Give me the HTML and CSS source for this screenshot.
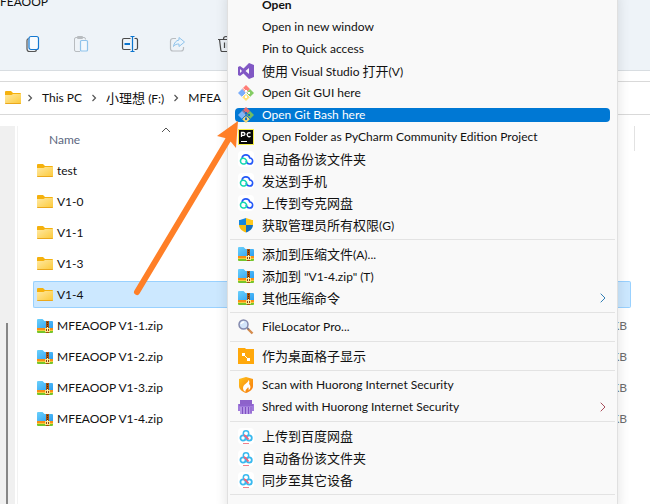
FILE: index.html
```html
<!DOCTYPE html>
<html lang="en">
<head>
<meta charset="utf-8">
<title>MFEAOOP</title>
<link rel="stylesheet" href="styles.css">
</head>
<body>
<svg class="defs" width="0" height="0" aria-hidden="true">
  <defs>
    <linearGradient id="gFolder" x1="0" y1="0" x2="1" y2="1"><stop offset="0" stop-color="#ffe9a3"/><stop offset="1" stop-color="#fcc938"/></linearGradient>
    <linearGradient id="gZip" x1="0" y1="0" x2="1" y2="1"><stop offset="0" stop-color="#6ad0fb"/><stop offset="1" stop-color="#2b9df0"/></linearGradient>
    <linearGradient id="gCloud" x1="0" y1="1" x2="1" y2="0"><stop offset="0" stop-color="#10e8a0"/><stop offset=".3" stop-color="#18b8e8"/><stop offset=".45" stop-color="#2458f8"/><stop offset="1" stop-color="#2458f8"/></linearGradient>
    <linearGradient id="gFire" x1="0" y1="0" x2="1" y2="1"><stop offset="0" stop-color="#ffc21a"/><stop offset="1" stop-color="#f7780c"/></linearGradient>
    <symbol id="folder" viewBox="0 0 16 16">
      <path d="M0 2a1 1 0 0 1 1-1h5l2 2h7a1 1 0 0 1 1 1v2H0z" fill="#f5b10d"/>
      <path d="M0 5h6.500L8 4H16v9a1 1 0 0 1-1 1H1a1 1 0 0 1-1-1z" fill="url(#gFolder)"/>
      <path d="M0 13h16a1 1 0 0 1-1 1H1a1 1 0 0 1-1-1z" fill="#eba81c"/>
    </symbol>
    <symbol id="zip" viewBox="0 0 16 16">
      <path d="M0 2a1 1 0 0 1 1-1h4.500l2 2H15a1 1 0 0 1 1 1v7H0z" fill="url(#gZip)"/>
      <path d="M0 10h16v2H0z" fill="#f98d14"/><path d="M0 12h16v1H0z" fill="#f5cc3a"/>
      <path d="M0 13h16v1a1 1 0 0 1-1 1H1a1 1 0 0 1-1-1z" fill="#76c52c"/>
      <path d="M9 3h3v12H9z" fill="#a5500c"/><path d="M10 4h1v1h-1zm0 2h1v1h-1zm0 2h1v1h-1z" fill="#4a2810"/>
      <path d="M8 10h5v4H8z" fill="#ffe184"/><path d="M9 11h3v2H9z" fill="#8a4510"/><path d="M10 9h1v4h-1z" fill="#fff3b8"/>
    </symbol>
    <symbol id="git" viewBox="0 0 16 16">
      <path d="M8 0l4 4-4 4-4-4z" fill="#ff7d76"/><path d="M12 4l4 4-4 4-4-4z" fill="#84cc63"/>
      <path d="M8 8l4 4-4 4-4-4z" fill="#ffe27a"/><path d="M4 4l4 4-4 4-4-4z" fill="#7aaefb"/>
      <path d="M4.500 3L8 6l3.500 2.500M8 5.500V12M4 12l4-4 4 4" fill="none" stroke="#f9f9f9"/>
      <path d="M7 5h2v2H7zm3 2h2v2h-2zm-3 4h2v2H7z" fill="#fff"/>
    </symbol>
    <symbol id="gitsel" viewBox="0 0 16 16">
      <path d="M8 0l4 4-4 4-4-4z" fill="#e46b70"/><path d="M12 4l4 4-4 4-4-4z" fill="#72bd62"/>
      <path d="M8 8l4 4-4 4-4-4z" fill="#ebd57a"/><path d="M4 4l4 4-4 4-4-4z" fill="#83b4f5"/>
      <path d="M4.500 3L8 6l3.500 2.500M8 5.500V12M4 12l4-4 4 4" fill="none" stroke="#2678c0"/>
      <path d="M7 5h2v2H7zm3 2h2v2h-2zm-3 4h2v2H7z" fill="#1870c0"/>
    </symbol>
    <symbol id="vs" viewBox="0 0 16 16">
      <path fill-rule="evenodd" d="M11 0l5 2v12l-5 2-5.500-5.500L2 13l-2-1V4l2-1 3.500 2.500zM11 5L7.500 8l3.500 3zM2 6v4l2-2z" fill="#8158c4"/>
    </symbol>
    <symbol id="pycharm" viewBox="0 0 16 16">
      <path d="M0 0h16v16H0z" fill="#f5f04a"/><path d="M1 1h14v14H1z" fill="#080808"/>
      <path d="M3.500 8V3.500h2a1.300 1.300 0 0 1 0 2.800h-2M12.500 4.200A2 2 0 1 0 12.500 7.200" fill="none" stroke="#fff" stroke-width="1.300"/><path d="M3 12h6v1H3z" fill="#fff"/>
    </symbol>
    <symbol id="cloud" viewBox="0 0 16 16">
      <rect width="16" height="16" rx="4" fill="#fff"/>
      <path d="M4 7a4 4 0 0 1 7.800 0A3 3 0 0 1 11.500 13C9.500 13 8.500 11.500 8 10" fill="none" stroke="#2458f8" stroke-width="1.600"/>
      <path d="M4.500 7.200A3 3 0 0 0 5 13h1.500A2.500 2.500 0 0 0 8 8.800C7.300 7.500 6 7 4.500 7.200" fill="none" stroke="#12d8b0" stroke-width="1.500"/>
    </symbol>
    <symbol id="shield" viewBox="0 0 16 16">
      <path d="M8 1L2 3H1v5h7z" fill="#1687dc"/><path d="M8 1l6 2h1v5H8z" fill="#ffc81c"/>
      <path d="M1 8h7v7.500C4 14 1.500 12 1 8z" fill="#f8bd10"/><path d="M15 8H8v7.500c4-1.500 6.500-3.500 7-7.500z" fill="#1470bd"/>
    </symbol>
    <symbol id="search" viewBox="0 0 16 16">
      <path d="M9.500 9.500l5 5" stroke="#d48b4d" stroke-width="2.400"/><path d="M9 8.500l2 2" stroke="#6f7690" stroke-width="1.500"/>
      <circle cx="5.500" cy="5.500" r="4.500" fill="#d3e5fa" stroke="#8389ad" stroke-width="1.500"/><path d="M3 5a3 3 0 0 1 3-2" fill="none" stroke="#fff" stroke-width="1.500"/>
    </symbol>
    <symbol id="fences" viewBox="0 0 16 16">
      <path d="M0 0h7l1 1h8v15H0z" fill="#ffa80b"/><path d="M5.500 6.500l5 5" stroke="#fff"/><path d="M4 5h3v3H4zm5 5h3v3H9z" fill="#fff"/>
    </symbol>
    <symbol id="huorong" viewBox="0 0 16 16">
      <path d="M8 0l7 2v7c0 3.500-3 5.500-7 7-4-1.500-7-3.500-7-7V2z" fill="url(#gFire)"/>
      <path d="M10.500 3c0 3-5.500 4-5.500 8 0 2 1 3 2.500 4-.5-2.500 2-3 2.500-5 .8 1 .8 2 .5 3.500 3-2.500 2-5 .5-6.500.6-1.500.5-3-.5-4z" fill="#fff"/>
    </symbol>
    <symbol id="shred" viewBox="0 0 16 16">
      <path d="M2 1h12v5H2z" fill="#8d62ca"/><path d="M0 5h16v7h-2V8H2v4H0z" fill="#a17bdc"/><path d="M2 8h12v7H2z" fill="#b394e4"/>
      <path d="M4.500 8v7M7.500 8v7M10.500 8v7M13 8v6" stroke="#8050c2"/><path d="M1 6h14" stroke="#7c4fc0"/>
    </symbol>
    <symbol id="baidu" viewBox="0 0 16 16">
      <rect width="16" height="16" rx="4" fill="#fff"/>
      <circle cx="8" cy="5.500" r="2.700" fill="none" stroke="#39b9ef" stroke-width="1.500"/>
      <circle cx="5" cy="10" r="2.600" fill="none" stroke="#39b9ef" stroke-width="1.800"/><circle cx="11.200" cy="10" r="2.600" fill="none" stroke="#39b9ef" stroke-width="1.800"/>
      <path d="M6 7l2 1.500 2.500 3" stroke="#f56078" stroke-width="1.800" fill="none"/><path d="M5 15.500h6" stroke="#f3808b"/>
    </symbol>
    <symbol id="crumb" viewBox="0 0 6 8"><path d="M1.500 1l3 3-3 3" fill="none" stroke="#555" stroke-width="1.200"/></symbol>
    <symbol id="sub" viewBox="0 0 6 10"><path d="M.7.7L5 5 .7 9.300" fill="none" stroke="currentColor"/></symbol>
  </defs>
</svg>

<main class="explorer">
  <header class="top">
    <h1 class="title">FEAOOP</h1>
    <div class="tools">
      <button class="tool" aria-label="Copy"><svg viewBox="0 0 18 18"><path d="M3.500 3.500c-1 .3-1.500 1-1.500 2v8.500a2.500 2.500 0 0 0 2.500 2.500h5c1 0 1.700-.5 2-1.500" fill="none" stroke="#555" stroke-width="1.200"/><rect x="4" y="1.500" width="9.500" height="13" rx="2" fill="#f8fbfe" stroke="#1478d0" stroke-width="1.200"/></svg></button>
      <button class="tool" aria-label="Paste"><svg viewBox="0 0 18 18"><path d="M7 16.500H3A1.500 1.500 0 0 1 1.500 15V4A1.500 1.500 0 0 1 3 2.500h8A1.500 1.500 0 0 1 12.500 4v.5M4.500 1.500h5v2h-5z" fill="none" stroke="#b8bcc0"/><rect x="7.500" y="5.500" width="7" height="10.500" rx="1" fill="#f2f8fd" stroke="#90c3eb" stroke-width="1.200"/></svg></button>
      <button class="tool" aria-label="Rename"><svg viewBox="0 0 18 18"><path d="M9.500 3.500H3A1.500 1.500 0 0 0 1.500 5v8A1.500 1.500 0 0 0 3 14.500h6.500M13.500 3.500h1A1.500 1.500 0 0 1 16.500 5v8a1.500 1.500 0 0 1-1.500 1.500h-1.500" fill="none" stroke="#4a4a4a" stroke-width="1.200"/><path d="M3.500 9H9" stroke="#0b74ce" stroke-width="2"/><path d="M9.500 1.500h4m-4 15h4m-2-15v15" stroke="#0b74ce" stroke-width="1.200"/></svg></button>
      <button class="tool" aria-label="Share"><svg viewBox="0 0 18 18"><path d="M7 3.500H4A2.500 2.500 0 0 0 1.500 6v7.500A2.500 2.500 0 0 0 4 16h8a2.500 2.500 0 0 0 2.500-2.500V12" fill="none" stroke="#b8bcc0" stroke-width="1.200"/><path d="M10 2.500L15.500 7 10 11.500V9c-2.500 0-4 .5-5.500 2.500C5 8 7 5.500 10 5z" fill="#eaf4fc" stroke="#90c3eb"/></svg></button>
      <button class="tool" aria-label="Delete"><svg viewBox="0 0 18 18"><path d="M1 4.500h16M6.500 4a2.500 2.500 0 0 1 5 0M2.500 4.500l1.300 10.500a1.500 1.500 0 0 0 1.500 1.500h7.400a1.500 1.500 0 0 0 1.500-1.500l1.300-10.500M7.500 7.500v5.500m3-5.500v5.500" fill="none" stroke="#4a4a4a" stroke-width="1.200"/></svg></button>
    </div>
  </header>
  <nav class="address" aria-label="Path">
    <svg class="icon"><use href="#folder"/></svg>
    <svg class="crumb"><use href="#crumb"/></svg><a href="#">This PC</a>
    <svg class="crumb"><use href="#crumb"/></svg><a href="#"><span class="zh">小理想</span> (F:)</a>
    <svg class="crumb"><use href="#crumb"/></svg><a href="#">MFEA</a>
    <svg class="crumb"><use href="#crumb"/></svg>
  </nav>
  <section class="content">
    <aside class="side"><div class="thumb"></div></aside>
    <div class="list">
      <table class="files">
        <thead><tr><th scope="col">Name<svg class="sort" viewBox="0 0 10 6"><path d="M1 5l4-4 4 4" fill="none" stroke="#555"/></svg></th><th class="size" aria-label="Size"></th></tr></thead>
        <tbody>
          <tr><td><span class="name"><svg class="icon"><use href="#folder"/></svg>test</span></td><td></td></tr>
          <tr><td><span class="name"><svg class="icon"><use href="#folder"/></svg>V1-0</span></td><td></td></tr>
          <tr><td><span class="name"><svg class="icon"><use href="#folder"/></svg>V1-1</span></td><td></td></tr>
          <tr><td><span class="name"><svg class="icon"><use href="#folder"/></svg>V1-3</span></td><td></td></tr>
          <tr class="selected"><td><span class="name"><svg class="icon"><use href="#folder"/></svg>V1-4</span></td><td></td></tr>
          <tr><td><span class="name"><svg class="icon"><use href="#zip"/></svg>MFEAOOP V1-1.zip</span></td><td class="size">KB</td></tr>
          <tr><td><span class="name"><svg class="icon"><use href="#zip"/></svg>MFEAOOP V1-2.zip</span></td><td class="size">KB</td></tr>
          <tr><td><span class="name"><svg class="icon"><use href="#zip"/></svg>MFEAOOP V1-3.zip</span></td><td class="size">KB</td></tr>
          <tr><td><span class="name"><svg class="icon"><use href="#zip"/></svg>MFEAOOP V1-4.zip</span></td><td class="size">KB</td></tr>
        </tbody>
      </table>
    </div>
  </section>
</main>

<div class="menu" role="menu">
  <div class="group">
    <button class="item default" role="menuitem"><span class="icon"></span>Open</button>
    <button class="item" role="menuitem"><span class="icon"></span>Open in new window</button>
    <button class="item" role="menuitem"><span class="icon"></span>Pin to Quick access</button>
    <button class="item" role="menuitem"><svg class="icon"><use href="#vs"/></svg><span><span class="zh">使用</span> Visual Studio <span class="zh">打开</span>(V)</span></button>
    <button class="item" role="menuitem"><svg class="icon"><use href="#git"/></svg>Open Git GUI here</button>
    <button class="item active" role="menuitem"><svg class="icon"><use href="#gitsel"/></svg>Open Git Bash here</button>
    <button class="item" role="menuitem"><svg class="icon"><use href="#pycharm"/></svg>Open Folder as PyCharm Community Edition Project</button>
    <button class="item" role="menuitem"><svg class="icon"><use href="#cloud"/></svg><span class="zh">自动备份该文件夹</span></button>
    <button class="item" role="menuitem"><svg class="icon"><use href="#cloud"/></svg><span class="zh">发送到手机</span></button>
    <button class="item" role="menuitem"><svg class="icon"><use href="#cloud"/></svg><span class="zh">上传到夸克网盘</span></button>
    <button class="item" role="menuitem"><svg class="icon"><use href="#shield"/></svg><span><span class="zh">获取管理员所有权限</span>(G)</span></button>
  </div>
  <div class="group">
    <button class="item" role="menuitem"><svg class="icon"><use href="#zip"/></svg><span><span class="zh">添加到压缩文件</span>(A)...</span></button>
    <button class="item" role="menuitem"><svg class="icon"><use href="#zip"/></svg><span><span class="zh">添加到</span> "V1-4.zip" (T)</span></button>
    <button class="item" role="menuitem"><svg class="icon"><use href="#zip"/></svg><span class="zh">其他压缩命令</span><svg class="sub blue"><use href="#sub"/></svg></button>
  </div>
  <div class="group">
    <button class="item" role="menuitem"><svg class="icon"><use href="#search"/></svg>FileLocator Pro...</button>
  </div>
  <div class="group">
    <button class="item" role="menuitem"><svg class="icon"><use href="#fences"/></svg><span class="zh">作为桌面格子显示</span></button>
  </div>
  <div class="group">
    <button class="item" role="menuitem"><svg class="icon"><use href="#huorong"/></svg>Scan with Huorong Internet Security</button>
    <button class="item" role="menuitem"><svg class="icon"><use href="#shred"/></svg>Shred with Huorong Internet Security<svg class="sub red"><use href="#sub"/></svg></button>
  </div>
  <div class="group">
    <button class="item" role="menuitem"><svg class="icon"><use href="#baidu"/></svg><span class="zh">上传到百度网盘</span></button>
    <button class="item" role="menuitem"><svg class="icon"><use href="#baidu"/></svg><span class="zh">自动备份该文件夹</span></button>
    <button class="item" role="menuitem"><svg class="icon"><use href="#baidu"/></svg><span class="zh">同步至其它设备</span></button>
  </div>
  <div class="group"></div>
</div>

<svg class="pointer" viewBox="0 0 112 180" aria-hidden="true">
  <path d="M7 172L98 20" stroke="#ff7f27" stroke-width="6" stroke-linecap="round"/>
  <path d="M108 1L87 16l8 2 6 4 5 6z" fill="#ff7f27"/>
</svg>
</body>
</html>
```

FILE: styles.css
```css
* {
  box-sizing: border-box;
}

body {
  margin: 0;
  height: 100vh;
  overflow: hidden;
  position: relative;
  background: #fff;
  color: #111;
  font: 12px/16px Lato, "Noto Sans CJK SC", sans-serif;
}

.defs {
  position: absolute;
}

button {
  border: 0;
  padding: 0;
  background: none;
  color: inherit;
  font: inherit;
}

a {
  color: inherit;
  text-decoration: none;
}

.zh {
  font-size: 13px;
}

.icon {
  width: 16px;
  height: 16px;
  flex: none;
}

.explorer {
  display: flex;
  flex-direction: column;
  height: 100vh;
}

.top {
  height: 71px;
  overflow: hidden;
  background: #eef3f8;
  border-bottom: 1px solid #d8dde1;
}

.title {
  margin: -6px 0 0;
  font-size: 12px;
  line-height: 16px;
  font-weight: 400;
}

.tools {
  display: flex;
  gap: 30px;
  padding: 25px 0 0 25px;
}

.tool {
  width: 18px;
  height: 18px;
}

.tool svg {
  display: block;
  width: 18px;
  height: 18px;
}

.address {
  display: flex;
  align-items: center;
  height: 34px;
  margin-top: 10px;
  padding-left: 5px;
  border: solid #d9d9d9;
  border-width: 1px 0;
}

.crumb {
  width: 6px;
  height: 8px;
  margin: 0 9px;
}

.icon + .crumb {
  margin-left: 6px;
}

.content {
  flex: 1;
  display: flex;
  min-height: 0;
}

.side {
  width: 15px;
  margin-top: 11px;
  padding: 197px 0 0 6px;
  background: #f0f0f0;
}

.thumb {
  width: 2px;
  height: 100%;
  background: #868686;
}

.list {
  position: relative;
  flex: 1;
  margin: 11px 0 0 2px;
  padding-right: 19px;
  border-left: 1px solid #f2f2f2;
}

.list::after {
  content: "";
  position: absolute;
  top: 0;
  right: 15px;
  width: 1px;
  height: 25px;
  background: #e2e2e2;
}

.files {
  width: calc(100% - 15px);
  margin: -4px 0 0 15px;
  border-collapse: separate;
  border-spacing: 0 4px;
}

.files th,
.files td {
  height: 27px;
  padding: 0 3px;
  border: solid transparent;
  border-width: 1px 0;
  text-align: left;
}

.files td:first-child {
  border-left-width: 1px;
  border-radius: 2px 0 0 2px;
}

.files td:last-child {
  border-right-width: 1px;
  border-radius: 0 2px 2px 0;
}

.files th {
  position: relative;
  padding-left: 16px;
  color: #5b6780;
  font-weight: 400;
}

.files .size {
  width: 80px;
  color: #6d6d6d;
  text-align: right;
}

.sort {
  position: absolute;
  top: 0;
  left: 128px;
  width: 10px;
  height: 6px;
}

.name {
  display: flex;
  align-items: center;
  gap: 4px;
}

.files .selected td {
  background: #cce8ff;
  border-color: #99d1ff;
}

.menu {
  position: absolute;
  top: -6px;
  bottom: -8px;
  left: 227px;
  width: 391px;
  padding: 0 2px;
  background: #f9f9f9;
  border: solid #e0e0e0;
  border-width: 0 1px;
  box-shadow: 0 0 12px rgba(0, 0, 0, 0.12);
  overflow: hidden;
}

.group {
  display: flex;
  flex-direction: column;
  gap: 8px;
  padding: 4px 5px 7px;
}

.group + .group {
  padding-top: 7px;
  border-top: 1px solid #e3e3e3;
}

.item {
  display: flex;
  align-items: center;
  gap: 8px;
  height: 14px;
  padding: 0 4px 0 3px;
  border-radius: 4px;
  text-align: left;
  white-space: nowrap;
}

.default {
  font-weight: 700;
}

.active {
  background: #0078d4;
  color: #fff;
}

.sub {
  width: 6px;
  height: 10px;
  margin-left: auto;
}

.blue {
  color: #337fb5;
}

.red {
  color: #a94f5c;
}

.pointer {
  position: absolute;
  top: 120px;
  left: 130px;
  width: 112px;
  height: 180px;
}
```
